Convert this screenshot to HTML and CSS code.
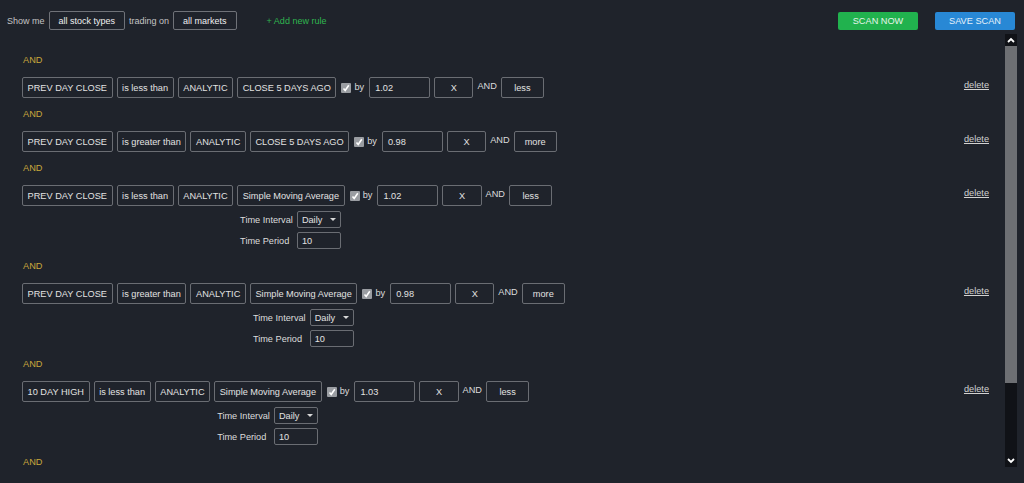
FILE: index.html
```html
<!DOCTYPE html>
<html lang="en">
<head>
  <meta charset="UTF-8" />
  <title>Stock Scanner</title>
  <link rel="stylesheet" href="styles.css">
</head>
<body>
  <div class="topbar">
    <span class="label">Show me</span>
    <span class="pick">all stock types</span>
    <span class="label">trading on</span>
    <span class="pick">all markets</span>
    <a class="add-rule">+ Add new rule</a>
    <span class="spacer"></span>
    <button class="btn scan">SCAN NOW</button>
    <button class="btn save">SAVE SCAN</button>
  </div>

  <div class="main">
    <div class="rules">
      <div class="and">AND</div>
      <div class="rule">
        <div class="fields">
          <span class="box">PREV DAY CLOSE</span>
          <span class="box">is less than</span>
          <span class="box">ANALYTIC</span>
          <div class="col"><span class="box">CLOSE 5 DAYS AGO</span></div>
          <span class="check"><svg width="10" height="10" viewBox="0 0 10 10"><polyline points="2.5,5.5 4.2,7.5 7.8,2.2" fill="none" stroke="#fff" stroke-width="1.6"/></svg></span>
          <span class="by">by</span>
          <span class="box input">1.02</span>
          <span class="box x">X</span>
          <span class="and-inline">AND</span>
          <span class="box op">less</span>
        </div>
        <a class="delete">delete</a>
      </div>

      <div class="and">AND</div>
      <div class="rule">
        <div class="fields">
          <span class="box">PREV DAY CLOSE</span>
          <span class="box">is greater than</span>
          <span class="box">ANALYTIC</span>
          <div class="col"><span class="box">CLOSE 5 DAYS AGO</span></div>
          <span class="check"><svg width="10" height="10" viewBox="0 0 10 10"><polyline points="2.5,5.5 4.2,7.5 7.8,2.2" fill="none" stroke="#fff" stroke-width="1.6"/></svg></span>
          <span class="by">by</span>
          <span class="box input">0.98</span>
          <span class="box x">X</span>
          <span class="and-inline">AND</span>
          <span class="box op">more</span>
        </div>
        <a class="delete">delete</a>
      </div>

      <div class="and">AND</div>
      <div class="rule">
        <div class="fields">
          <span class="box">PREV DAY CLOSE</span>
          <span class="box">is less than</span>
          <span class="box">ANALYTIC</span>
          <div class="col">
            <span class="box">Simple Moving Average</span>
            <div class="opts">
              <span>Time Interval</span>
              <span class="select">Daily</span>
              <span>Time Period</span>
              <span class="small-input">10</span>
            </div>
          </div>
          <span class="check"><svg width="10" height="10" viewBox="0 0 10 10"><polyline points="2.5,5.5 4.2,7.5 7.8,2.2" fill="none" stroke="#fff" stroke-width="1.6"/></svg></span>
          <span class="by">by</span>
          <span class="box input">1.02</span>
          <span class="box x">X</span>
          <span class="and-inline">AND</span>
          <span class="box op">less</span>
        </div>
        <a class="delete">delete</a>
      </div>

      <div class="and">AND</div>
      <div class="rule">
        <div class="fields">
          <span class="box">PREV DAY CLOSE</span>
          <span class="box">is greater than</span>
          <span class="box">ANALYTIC</span>
          <div class="col">
            <span class="box">Simple Moving Average</span>
            <div class="opts">
              <span>Time Interval</span>
              <span class="select">Daily</span>
              <span>Time Period</span>
              <span class="small-input">10</span>
            </div>
          </div>
          <span class="check"><svg width="10" height="10" viewBox="0 0 10 10"><polyline points="2.5,5.5 4.2,7.5 7.8,2.2" fill="none" stroke="#fff" stroke-width="1.6"/></svg></span>
          <span class="by">by</span>
          <span class="box input">0.98</span>
          <span class="box x">X</span>
          <span class="and-inline">AND</span>
          <span class="box op">more</span>
        </div>
        <a class="delete">delete</a>
      </div>

      <div class="and">AND</div>
      <div class="rule">
        <div class="fields">
          <span class="box">10 DAY HIGH</span>
          <span class="box">is less than</span>
          <span class="box">ANALYTIC</span>
          <div class="col">
            <span class="box">Simple Moving Average</span>
            <div class="opts">
              <span>Time Interval</span>
              <span class="select">Daily</span>
              <span>Time Period</span>
              <span class="small-input">10</span>
            </div>
          </div>
          <span class="check"><svg width="10" height="10" viewBox="0 0 10 10"><polyline points="2.5,5.5 4.2,7.5 7.8,2.2" fill="none" stroke="#fff" stroke-width="1.6"/></svg></span>
          <span class="by">by</span>
          <span class="box input">1.03</span>
          <span class="box x">X</span>
          <span class="and-inline">AND</span>
          <span class="box op">less</span>
        </div>
        <a class="delete">delete</a>
      </div>

      <div class="and">AND</div>
    </div>

    <div class="scrollbar">
      <div class="arrow">
        <svg width="8" height="6" viewBox="0 0 8 6"><polyline points="1,5 4,2 7,5" fill="none" stroke="#fff" stroke-width="1.8"/></svg>
      </div>
      <div class="track"><div class="thumb"></div></div>
      <div class="arrow">
        <svg width="8" height="6" viewBox="0 0 8 6"><polyline points="1,1 4,4 7,1" fill="none" stroke="#fff" stroke-width="1.8"/></svg>
      </div>
    </div>
  </div>
</body>
</html>
```

FILE: styles.css
```css
body {
  margin: 0;
  height: 483px;
  overflow: hidden;
  font-family: 'Liberation Sans', Arial, sans-serif;
  font-size: 9.2px;
  background-color: #1f232b;
  color: #dcdcdc;
}

.topbar {
  display: flex;
  align-items: center;
  gap: 4px;
  height: 19px;
  padding: 11px 9px 0 7px;
  font-size: 9px;
}

.topbar .label {
  color: #c4c4c4;
}

.pick {
  display: flex;
  align-items: center;
  height: 17px;
  padding: 0 9px;
  border: 1px solid #6f7278;
  border-radius: 2px;
  color: #f0f0f0;
}

.add-rule {
  margin-left: 26px;
  color: #2fb54f;
}

.spacer {
  flex: 1;
}

.btn {
  width: 80px;
  height: 18px;
  padding: 0;
  border: none;
  border-radius: 2px;
  font-family: inherit;
  font-size: 9.2px;
  color: #e8f4ec;
}

.scan {
  background-color: #21b24e;
}

.save {
  margin-left: 13px;
  background-color: #2888d5;
  color: #e6f1fa;
}

.main {
  display: flex;
  height: 433px;
  margin-top: 4px;
  padding-right: 7px;
}

.rules {
  flex: 1;
  overflow: hidden;
  padding: 18px 16px 0 22px;
}

.and {
  height: 16px;
  line-height: 16px;
  margin-bottom: 9px;
  padding-left: 1px;
  color: #c9a83c;
}

.rule {
  display: flex;
  justify-content: space-between;
  align-items: flex-start;
  margin-bottom: 8px;
}

.fields {
  display: flex;
  align-items: flex-start;
  gap: 4px;
}

.col {
  display: flex;
  flex-direction: column;
}

.box {
  display: flex;
  align-items: center;
  justify-content: center;
  height: 19px;
  padding: 0 4.6px;
  border: 1px solid #6a6d73;
  border-radius: 2px;
  color: #e2e2e2;
  white-space: nowrap;
}

.box.input {
  justify-content: flex-start;
  width: 49px;
  padding: 0 5px;
}

.box.x {
  width: 28px;
}

.box.op {
  min-width: 32px;
}

.check {
  display: flex;
  width: 10px;
  height: 10px;
  margin: 6px 0 0 1px;
  background: #9a9da2;
  border-radius: 1px;
}

.by {
  line-height: 21px;
  margin-left: -1px;
  margin-right: 1px;
}

.and-inline {
  line-height: 18px;
}

.opts {
  display: grid;
  grid-template-columns: auto 44px;
  column-gap: 4px;
  row-gap: 4px;
  align-items: center;
  margin: 5px 0 1px 3px;
  justify-content: start;
}

.select,
.small-input {
  display: flex;
  align-items: center;
  height: 15px;
  padding: 0 4px;
  border: 1px solid #6a6d73;
  border-radius: 2px;
  color: #e2e2e2;
}

.select::after {
  content: "";
  margin-left: auto;
  border-left: 3px solid transparent;
  border-right: 3px solid transparent;
  border-top: 3px solid #d8d8d8;
}

.delete {
  margin-top: 3px;
  color: #d2d2d2;
  text-decoration: underline;
}

.scrollbar {
  display: flex;
  flex-direction: column;
  width: 12px;
  background: #101217;
}

.arrow {
  display: flex;
  align-items: center;
  justify-content: center;
  height: 12px;
}

.track {
  flex: 1;
}

.thumb {
  height: 337px;
  background: #6d6f73;
}
```
